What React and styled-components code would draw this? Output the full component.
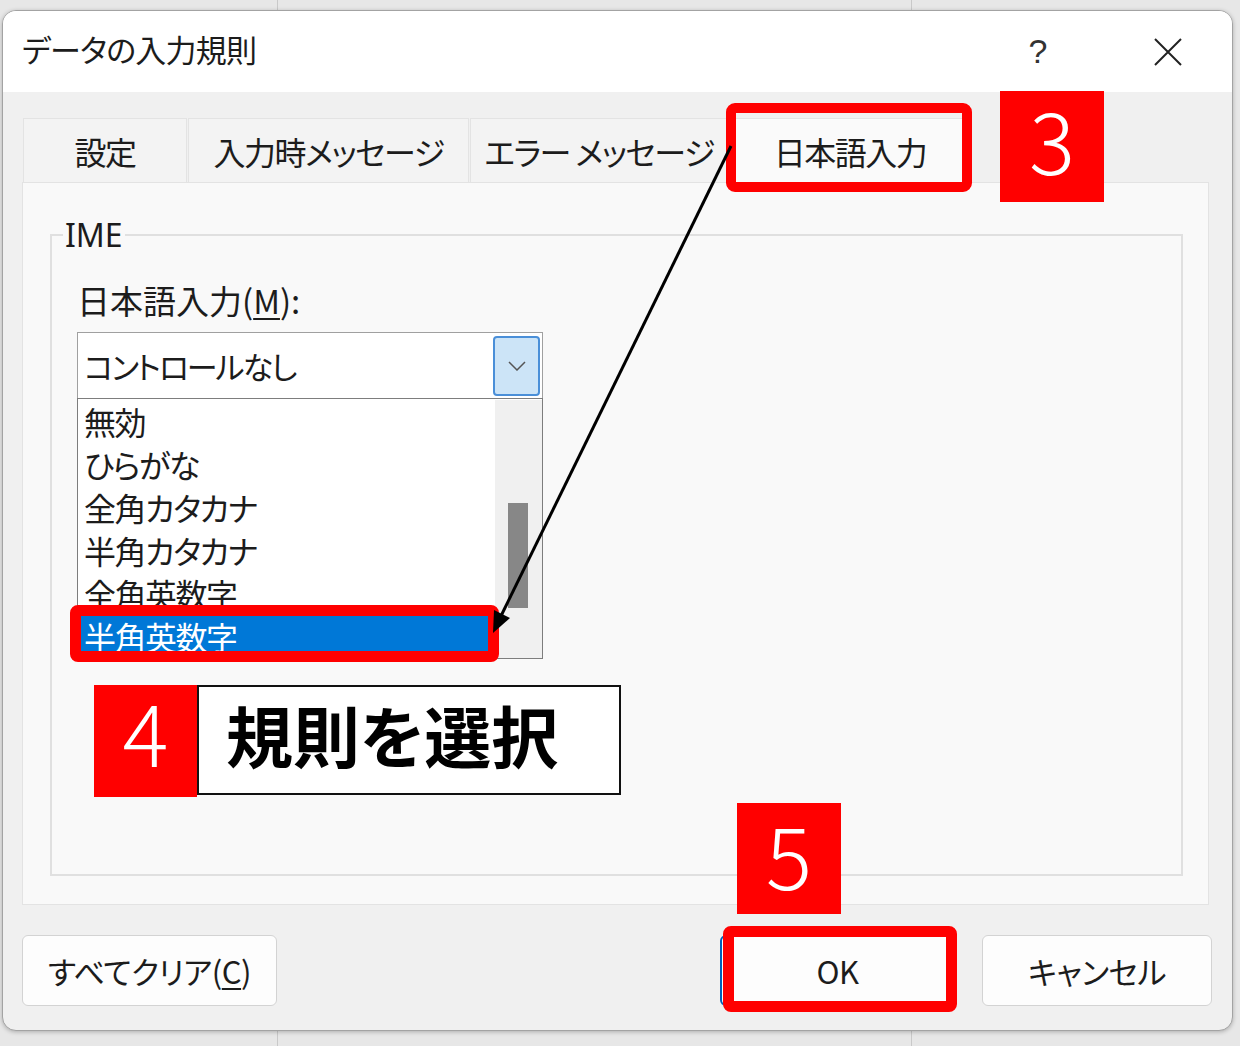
import React from "react";
import styled, { createGlobalStyle } from "styled-components";

const RED = "#ff0000";

const GlobalStyle = createGlobalStyle`
  html, body {
    margin: 0;
    padding: 0;
  }
  body {
    background: #e7e7e7;
    font-family: "Noto Sans CJK JP", "Noto Sans", sans-serif;
    font-feature-settings: "palt";
    color: #1c1c1c;
  }
`;

const imeModes = ["無効", "ひらがな", "全角カタカナ", "半角カタカナ", "全角英数字", "半角英数字"];

const tabs = [
  { label: "設定", width: 164 },
  { label: "入力時メッセージ", width: 281 },
  { label: "エラー メッセージ", width: 258 },
  { label: "日本語入力", width: 242, active: true },
];

const App = () => {
  return (
    <>
      <GlobalStyle />
      <Screen>
        <Dialog>
          <TitleBar>
            <Title>データの入力規則</Title>
            <TitleButton>
              <Help>?</Help>
            </TitleButton>
            <TitleButton>
              <svg width="30" height="30" viewBox="0 0 30 30">
                <path d="M2 2 L28 28 M28 2 L2 28" stroke="#222" strokeWidth="2" fill="none" />
              </svg>
            </TitleButton>
          </TitleBar>

          <Body>
            <TabRow>
              {tabs.map((t) => (
                <Tab key={t.label} $w={t.width} $active={t.active}>
                  {t.label}
                  {t.active && <TabFrame />}
                </Tab>
              ))}
            </TabRow>

            <Panel>
              <Group>
                <Legend>IME</Legend>
                <GroupContent>
                  <FieldLabel>
                    日本語入力(<u>M</u>):
                  </FieldLabel>
                  <Combo>
                    <ComboText>コントロールなし</ComboText>
                    <DropButton>
                      <svg width="18" height="10" viewBox="0 0 18 10">
                        <polyline points="1,1 9,9 17,1" stroke="#555" strokeWidth="1.5" fill="none" />
                      </svg>
                    </DropButton>
                  </Combo>
                  <ListWrap>
                    <ListViewport>
                      {imeModes.map((m, i) => (
                        <ListRow key={m} $selected={i === imeModes.length - 1}>
                          {m}
                        </ListRow>
                      ))}
                    </ListViewport>
                    <ScrollTrack>
                      <ScrollThumb />
                    </ScrollTrack>
                    <SelectFrame />
                  </ListWrap>

                  <Callout>
                    <CalloutNum>4</CalloutNum>
                    <CalloutText>規則を選択</CalloutText>
                  </Callout>
                </GroupContent>
              </Group>
            </Panel>

            <Footer>
              <Button $w={255}>
                すべてクリア(<u>C</u>)
              </Button>
              <ButtonGroup>
                <Button $w={235} $default>
                  OK
                  <OkFrame />
                </Button>
                <Button $w={230}>キャンセル</Button>
              </ButtonGroup>
            </Footer>
          </Body>
        </Dialog>

        <StepBadge $left={1000} $top={91} $lift={18}>3</StepBadge>
        <StepBadge $left={737} $top={803} $lift={12}>5</StepBadge>

        <Arrow viewBox="0 0 1240 1046">
          <line x1="731" y1="146" x2="500" y2="618" stroke="#000" strokeWidth="3" />
          <polygon points="493,633 494,610 510,618" fill="#000" />
        </Arrow>
      </Screen>
    </>
  );
};

export default App;

const Screen = styled.div`
  position: relative;
  width: 1240px;
  height: 1046px;
  overflow: hidden;
  box-sizing: border-box;
  padding: 10px 0 0 2px;
  background-color: #e7e7e7;
  background-image: linear-gradient(to right, transparent 277px, #c9c9c9 277px, #c9c9c9 278px, transparent 278px),
    linear-gradient(to right, transparent 911px, #c9c9c9 911px, #c9c9c9 912px, transparent 912px);
`;

const Dialog = styled.div`
  width: 1231px;
  height: 1021px;
  box-sizing: border-box;
  border: 1px solid #a3a3a3;
  border-radius: 14px;
  overflow: hidden;
  background: #f0f0f0;
  display: flex;
  flex-direction: column;
  box-shadow: 0 1px 4px rgba(0, 0, 0, 0.25);
`;

const TitleBar = styled.div`
  height: 81px;
  flex-shrink: 0;
  background: #ffffff;
  display: flex;
  align-items: center;
  padding: 0 34px 0 19px;
`;

const Title = styled.div`
  flex: 1;
  font-size: 31px;
  letter-spacing: -0.8px;
  color: #1c1c1c;
  padding-bottom: 6px;
`;

const TitleButton = styled.div`
  width: 60px;
  height: 60px;
  display: grid;
  place-items: center;
  margin-left: 70px;
  &:first-of-type {
    margin-left: 0;
  }
`;

const Help = styled.span`
  font-family: "Liberation Sans", sans-serif;
  font-size: 34px;
  color: #333;
`;

const Body = styled.div`
  flex: 1;
  display: flex;
  flex-direction: column;
  padding: 26px 23px 0 19px;
`;

const TabRow = styled.div`
  display: flex;
  gap: 1px;
  margin-left: 1px;
  height: 64px;
`;

const Tab = styled.div`
  position: relative;
  width: ${(p) => p.$w}px;
  height: 64px;
  box-sizing: border-box;
  display: flex;
  align-items: center;
  justify-content: center;
  background: ${(p) => (p.$active ? "#fafafa" : "#f3f3f3")};
  border: 1px solid #e3e3e3;
  border-bottom: none;
  font-size: 32px;
  letter-spacing: -1.5px;
  color: #1c1c1c;
  white-space: pre;
`;

const TabFrame = styled.div`
  position: absolute;
  left: -4px;
  right: -2px;
  top: -16px;
  bottom: -10px;
  border: 10px solid ${RED};
  border-radius: 9px;
  z-index: 2;
`;

const Panel = styled.div`
  height: 723px;
  box-sizing: border-box;
  background: #f9f9f9;
  border: 1px solid #e3e3e3;
  display: flex;
  flex-direction: column;
  padding: 32px 25px 28px 27px;
`;

const Group = styled.fieldset`
  flex: 1;
  margin: 0;
  min-width: 0;
  border: 2px solid #e0e0e0;
  padding: 0 0 0 11px;
`;

const Legend = styled.legend`
  font-family: "Noto Sans", "Noto Sans CJK JP", sans-serif;
  font-size: 32px;
  line-height: 40px;
  padding: 0 2px;
  color: #1c1c1c;
`;

const GroupContent = styled.div`
  padding-left: 14px;
  margin-top: 25px;
`;

const FieldLabel = styled.div`
  font-size: 33px;
  line-height: 40px;
  color: #1c1c1c;
  u {
    text-underline-offset: 4px;
    text-decoration-thickness: 2px;
  }
`;

const Combo = styled.div`
  margin-top: 12px;
  width: 466px;
  height: 66px;
  box-sizing: border-box;
  border: 1px solid #a0a0a0;
  border-bottom: none;
  background: #ffffff;
  display: flex;
  align-items: center;
  justify-content: space-between;
  padding-left: 6px;
`;

const ComboText = styled.div`
  font-size: 31px;
  letter-spacing: -2px;
  color: #1c1c1c;
`;

const DropButton = styled.div`
  width: 47px;
  height: 60px;
  margin-right: 2px;
  box-sizing: border-box;
  background: #cce4f7;
  border: 2px solid #4a8fd8;
  border-radius: 4px;
  display: grid;
  place-items: center;
`;

const ListWrap = styled.div`
  position: relative;
  width: 466px;
  height: 261px;
  box-sizing: border-box;
  border: 1px solid #7d7d7d;
  padding-top: 1px;
  background: #ffffff;
  display: flex;
`;

const ListViewport = styled.div`
  flex: 1;
  height: 258px;
`;

const ListRow = styled.div`
  height: 43px;
  line-height: 43px;
  padding-left: 6px;
  font-size: 32px;
  letter-spacing: -1.5px;
  white-space: nowrap;
  background: ${(p) => (p.$selected ? "#0078d7" : "transparent")};
  color: ${(p) => (p.$selected ? "#ffffff" : "#1c1c1c")};
`;

const ScrollTrack = styled.div`
  width: 47px;
  height: 258px;
  background: #f0f0f0;
`;

const ScrollThumb = styled.div`
  margin: 103px 0 0 13px;
  width: 20px;
  height: 105px;
  background: #878787;
`;

const SelectFrame = styled.div`
  position: absolute;
  left: -8px;
  top: 206px;
  width: 429px;
  height: 57px;
  box-sizing: border-box;
  border: 11px solid ${RED};
  border-radius: 8px;
`;

const Callout = styled.div`
  display: flex;
  margin: 26px 0 0 17px;
`;

const CalloutNum = styled.div`
  width: 103px;
  height: 112px;
  background: ${RED};
  color: #ffffff;
  font-size: 86px;
  font-weight: 300;
  display: grid;
  place-items: center;
  line-height: 1;
  padding-bottom: 22px;
  box-sizing: border-box;
`;

const CalloutText = styled.div`
  width: 424px;
  height: 110px;
  box-sizing: border-box;
  border: 2px solid #111;
  background: #ffffff;
  display: flex;
  align-items: center;
  padding: 0 0 14px 27px;
  font-size: 67px;
  font-weight: 700;
  color: #000;
`;

const Footer = styled.div`
  display: flex;
  justify-content: space-between;
  align-items: flex-start;
  margin-top: 30px;
`;

const ButtonGroup = styled.div`
  display: flex;
  gap: 27px;
  margin-right: -3px;
`;

const Button = styled.div`
  position: relative;
  width: ${(p) => p.$w}px;
  height: 71px;
  box-sizing: border-box;
  background: #fdfdfd;
  border: ${(p) => (p.$default ? "2px solid #005fb8" : "1px solid #d3d3d3")};
  border-radius: 6px;
  display: flex;
  align-items: center;
  justify-content: center;
  font-size: 31px;
  letter-spacing: -0.5px;
  color: #1c1c1c;
  u {
    text-underline-offset: 4px;
    text-decoration-thickness: 2px;
  }
`;

const OkFrame = styled.div`
  position: absolute;
  left: 1px;
  right: -4px;
  top: -11px;
  bottom: -8px;
  border: 11px solid ${RED};
  border-radius: 8px;
`;

const StepBadge = styled.div`
  position: absolute;
  left: ${(p) => p.$left}px;
  top: ${(p) => p.$top}px;
  width: 104px;
  height: 111px;
  background: ${RED};
  color: #ffffff;
  font-size: 86px;
  font-weight: 300;
  line-height: 1;
  display: grid;
  place-items: center;
  padding-bottom: ${(p) => p.$lift}px;
  box-sizing: border-box;
  z-index: 3;
`;

const Arrow = styled.svg`
  position: absolute;
  left: 0;
  top: 0;
  width: 1240px;
  height: 1046px;
  pointer-events: none;
  z-index: 4;
`;
